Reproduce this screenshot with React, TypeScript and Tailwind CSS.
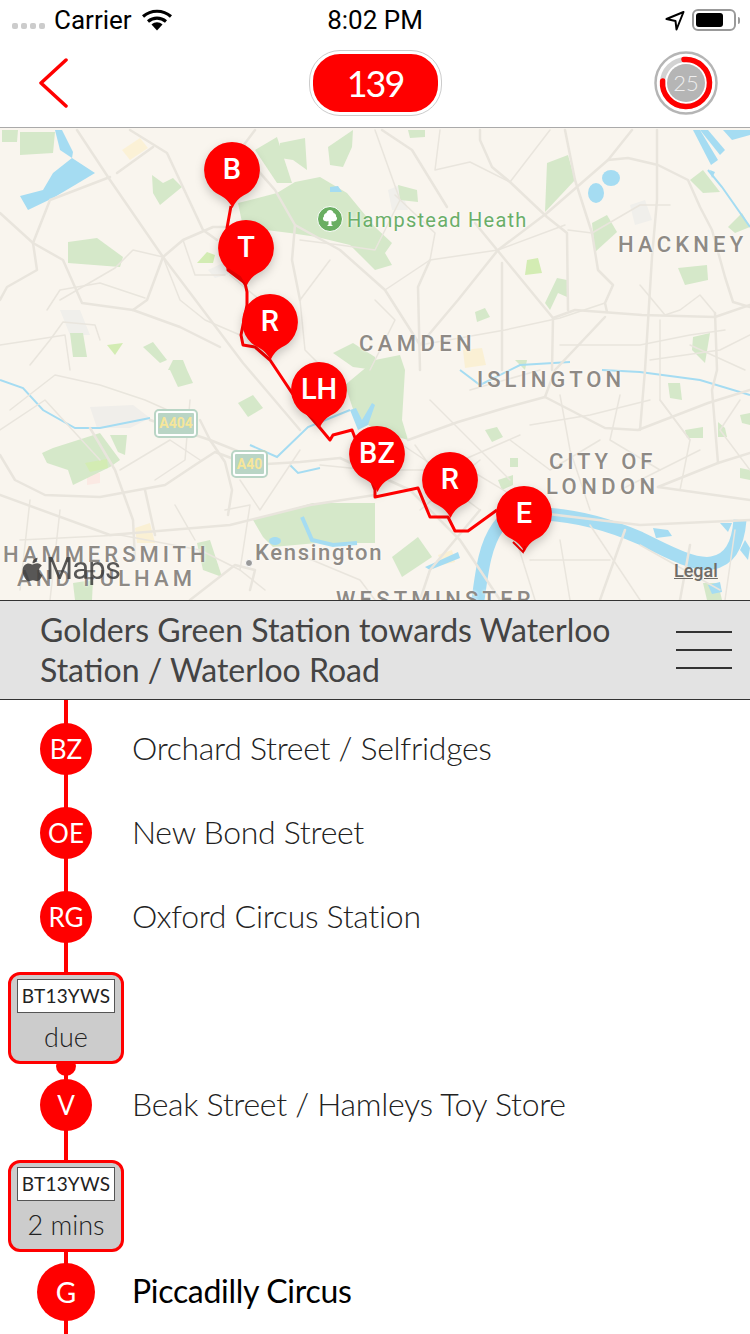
import { FaApple } from "react-icons/fa";

// map artwork uses page coordinates, hence the viewBox offset of 128
const water = [
  "20,196 43,190 53,173 72,158 95,173 75,185 53,198 28,210",
  "55,130 62,130 73,152 72,158 60,150",
  "693,130 700,130 718,160 711,165",
  "708,130 725,150 720,155 700,130",
  "723,130 750,130 750,135 732,140",
  "330,187 338,186 342,192 330,192",
  "710,170 715,172 712,178",
  "425,567 458,552 460,558 430,570",
  "720,523 732,523 728,532",
  "653,528 668,530 672,536 656,538",
  "740,550 745,540 750,548 748,560",
  "350,410 356,408 362,420 372,403 375,405 368,425 358,430",
  "708,585 720,582 722,592 712,594",
];

const parks = [
  "20,132 55,132 53,153 20,155",
  "2,130 18,130 17,142 2,142",
  "152,175 163,183 173,178 182,187 160,205 153,193",
  "255,150 277,137 292,183 277,183",
  "280,143 305,138 307,170 293,160 280,158",
  "328,147 353,130 352,147 343,167 330,165",
  "238,203 277,193 295,182 320,177 347,193 375,227 392,243 385,253 392,265 375,270 350,245 317,237 290,233 243,227",
  "68,242 97,238 123,257 120,267 68,263",
  "70,333 83,333 87,357 73,357",
  "143,347 153,342 167,360 160,363",
  "173,360 183,360 187,370 168,370",
  "333,353 353,343 375,357 375,370 353,367",
  "345,385 375,360 400,355 405,370 402,420 408,440 375,430 355,415",
  "547,163 568,155 575,180 545,212",
  "592,223 607,215 617,232 595,252",
  "557,278 567,280 567,297 558,293 550,310 545,303",
  "398,185 417,190 418,202 400,200",
  "690,180 703,170 720,192 703,193",
  "678,268 707,265 708,280 685,285",
  "475,312 485,308 490,317 477,322",
  "693,337 710,333 705,363 692,350",
  "728,227 742,213 750,227 735,233",
  "408,130 425,130 425,137 410,138",
  "515,360 527,360 525,370",
  "170,370 187,370 193,383 178,387",
  "238,403 253,395 263,408 248,417",
  "42,453 53,448 100,433 120,460 110,467 73,485 68,470 47,463",
  "110,435 127,435 125,455 118,452",
  "253,520 313,503 375,503 375,543 317,543 273,547 263,537",
  "197,543 210,540 222,577 203,570",
  "73,583 93,580 92,600 75,600",
  "485,430 497,427 503,437 492,442",
  "510,458 518,458 518,467 510,467",
  "498,480 513,475 513,485 502,490",
  "668,383 680,383 682,400 670,398",
  "685,430 703,427 703,438 687,438",
  "718,422 725,428 727,437 718,437",
  "740,468 750,470 750,480 740,478",
  "392,557 418,537 432,557 402,577",
  "703,583 718,583 722,600 707,600",
  "740,415 750,413 750,425 742,423",
];

const lightParks = [
  "197,263 207,252 215,255 213,263",
  "107,345 123,343 115,355",
  "527,260 538,258 542,273 525,275",
  "85,463 107,459 108,468 90,472",
];

const majorRoads = [
  "77,130 110,180 163,257 243,363 300,430",
  "0,213 33,243 63,260 82,303 133,310 180,327 220,347",
  "33,243 37,270 7,287 0,300",
  "110,177 50,200 33,243",
  "130,130 167,153 203,230 217,240",
  "163,257 183,240 213,227 230,227",
  "163,257 147,300 133,310",
  "153,147 117,173",
  "382,130 412,150 447,207",
  "480,130 480,140 492,167 510,182 547,217 567,233 568,310",
  "565,130 575,180 592,233 598,270 613,285 605,303 607,312",
  "632,130 608,160 547,213 498,250 458,300 420,345",
  "608,160 628,158 658,165 688,180 700,207 712,230 725,277 733,302 750,307",
  "657,130 657,200 652,257 645,370 640,430",
  "475,223 553,318 552,370",
  "553,318 575,310 642,315 715,317 750,305",
  "715,313 717,370 712,390 718,463",
  "430,260 418,287 420,370",
  "502,263 502,370",
  "605,317 555,370 545,397",
  "408,440 458,422 508,407 545,397 605,428 638,430 708,403 750,390",
  "658,487 750,500",
  "658,487 718,463 750,453",
  "0,495 110,535 230,525 310,505 375,495",
  "0,455 15,480 45,495 100,497 165,485 195,465 215,452 250,465 300,462 340,458",
  "145,490 155,535",
  "90,428 115,470 133,520 135,560",
  "200,420 210,440 225,462 232,490 228,515",
  "150,420 210,440 260,460",
  "515,510 640,525 750,520",
  "255,130 240,150 275,190 295,225 292,260 300,300",
  "295,225 340,250 385,290 420,345",
  "250,590 255,570 235,565 190,600",
  "340,458 410,490 460,540 500,600",
  "480,510 430,570 420,600",
  "625,530 600,600",
  "690,545 680,600",
];

const minorRoads = [
  "60,300 115,268 133,250 163,257",
  "47,310 60,290 100,283 145,298",
  "0,345 33,340 65,335 70,370",
  "30,365 50,340 63,322 95,325 100,340",
  "230,275 260,300 265,340",
  "163,257 180,300 205,320 240,335",
  "183,240 195,275 225,275",
  "300,240 340,245 375,250 400,200 375,130",
  "330,260 300,300 305,350 325,370",
  "375,300 395,320 370,370",
  "395,195 435,233 430,260 385,290",
  "440,130 435,170 470,162 510,182 550,130",
  "430,260 498,250 565,225",
  "605,303 560,318 505,330 420,345",
  "568,230 592,233 640,205 670,205",
  "640,285 665,315 680,310 700,295 715,313",
  "725,330 690,335 640,345 560,345",
  "650,360 720,350 750,335",
  "10,410 55,375 100,385 145,400 190,420",
  "0,430 45,400 100,460",
  "155,480 185,460 190,400",
  "240,480 260,510 300,450",
  "120,470 170,440 200,460",
  "320,465 370,470 395,440 440,470",
  "225,510 250,505 240,570 265,590",
  "300,555 360,580 375,600",
  "20,540 120,535 200,550 240,570",
  "175,505 195,540",
  "30,500 20,590",
  "60,510 50,600",
  "430,400 470,440 510,480",
  "415,445 440,480 480,510",
  "470,390 540,370",
  "510,440 550,470 600,440",
  "560,395 570,450 590,510",
  "620,395 610,440 660,470",
  "660,400 690,440 680,490",
  "740,400 720,430 750,470",
  "620,490 700,450",
  "560,540 570,600",
  "590,525 640,600",
  "530,560 610,560",
  "640,545 720,590",
  "735,530 725,600",
  "510,520 535,600",
  "440,470 520,435",
  "400,470 470,470 520,500",
  "420,510 480,460",
  "530,425 590,415 650,400",
  "660,320 660,400 690,440",
  "745,370 690,345",
];

function MapArt() {
  return (
    <svg viewBox="0 128 750 472" className="absolute inset-0 h-full w-full">
      <rect x="0" y="128" width="750" height="472" fill="#f9f5ee" />
      <polygon points="90,407 133,405 150,418 130,428 97,428" fill="#f0eeea" />
      <polygon points="60,310 80,310 90,335 70,335" fill="#f0efeb" />
      <polygon points="208,270 225,262 235,272 215,278" fill="#f0efeb" />
      <polygon points="630,205 645,200 652,220 635,225" fill="#f0efeb" />
      <polygon points="388,190 400,185 408,210 392,210" fill="#f0efeb" />
      <polygon points="122,150 140,138 148,148 130,160" fill="#fbf1d6" />
      <polygon points="135,528 150,523 155,543 137,543" fill="#faf0d4" />
      <polygon points="463,350 482,348 486,365 465,368" fill="#faf0d4" />
      <polygon points="438,555 452,550 455,562 442,565" fill="#faf0d4" />
      <polygon points="87,472 100,473 100,483 87,485" fill="#fbe9e3" />
      {parks.map((p, i) => (
        <polygon key={i} points={p} fill="#d5e8c9" />
      ))}
      {lightParks.map((p, i) => (
        <polygon key={i} points={p} fill="#d3ecb3" />
      ))}
      <path d="M478 600 C482 570 485 545 498 527 C505 515 520 512 545 514 C580 516 610 525 640 538 C670 553 695 566 712 563 C730 560 738 545 740 520" fill="none" stroke="#a5dcf2" strokeWidth="13" />
      {water.map((p, i) => (
        <polygon key={i} points={p} fill="#a5dcf2" />
      ))}
      <ellipse cx="596" cy="193" rx="8" ry="10" fill="#a5dcf2" />
      <ellipse cx="611" cy="178" rx="9" ry="8" fill="#a5dcf2" />
      <ellipse cx="275" cy="541" rx="6" ry="4" fill="#a5dcf2" />
      <g fill="none" stroke="#a5dcf2" strokeWidth="2">
        <polyline points="0,380 23,388 43,410 75,428 100,428 150,418" />
        <polyline points="250,445 277,457 308,427 350,410" />
        <polyline points="290,465 298,473 320,468" />
        <polyline points="708,170 722,187 750,227" />
        <polyline points="602,370 640,372 700,380 750,395" />
        <polyline points="460,370 480,385 520,365 570,362" />
        <polyline points="302,517 312,540 333,545 357,543" strokeWidth="4" />
      </g>
      <g fill="none" stroke="#e9e5dd" strokeLinejoin="round" strokeLinecap="round">
        {minorRoads.map((p, i) => (
          <polyline key={i} points={p} strokeWidth="1.5" />
        ))}
        {majorRoads.map((p, i) => (
          <polyline key={i} points={p} strokeWidth="2.5" />
        ))}
      </g>
      <polyline
        points="231,206 227,228 228,270 245,283 247,292 247,305 241,335 243,345 255,347 270,360 300,405 320,428 330,440 333,435 352,430 375,490 375,497 418,488 430,517 448,517 455,531 468,531 497,510"
        fill="none"
        stroke="#f00"
        strokeWidth="3"
        strokeLinejoin="round"
      />
    </svg>
  );
}

function Pin({ x, y, label }: { x: number; y: number; label: string }) {
  return (
    <div className="absolute h-[66px] w-[56px]" style={{ left: x - 28, top: y - 156 }}>
      <svg viewBox="0 0 56 66" className="absolute inset-0 h-full w-full drop-shadow-[0_4px_5px_rgba(0,0,0,0.2)]">
        <path d="M28 0a28 28 0 0 1 11 53.7C35 56 31 60 28.5 66 26 60 21 56 17 53.7A28 28 0 0 1 28 0z" fill="#f00" />
      </svg>
      <span className="absolute inset-x-0 top-0 flex h-[56px] items-center justify-center font-['Roboto',sans-serif] text-[29px] font-medium text-white">
        {label}
      </span>
    </div>
  );
}

function MapLabel({ x, y, text, className }: { x: number; y: number; text: string; className: string }) {
  return (
    <span
      className={`absolute whitespace-nowrap font-['Roboto',sans-serif] leading-none [text-shadow:0_0_3px_#fff] ${className}`}
      style={{ left: x, top: y - 128 }}
    >
      {text}
    </span>
  );
}

function RoadBadge({ x, y, w, h, text }: { x: number; y: number; w: number; h: number; text: string }) {
  return (
    <div
      className="absolute flex items-center justify-center rounded-[5px] border-2 border-[#b9d5c5] bg-[#b9d5c5] font-['Roboto',sans-serif] text-[14px] font-bold text-[#f6e69a] outline-2 -outline-offset-4 outline-white"
      style={{ left: x, top: y - 128, width: w, height: h }}
    >
      {text}
    </div>
  );
}

function StatusBar() {
  return (
    <div className="grid h-10 grid-cols-[1fr_auto_1fr] items-center font-['Roboto',sans-serif] text-[26px] leading-none text-black">
      <div className="flex items-center pl-3">
        <div className="mt-3 flex gap-[3px]">
          <span className="h-[6px] w-[6px] rounded-[2px] bg-[#ccc]" />
          <span className="h-[6px] w-[6px] rounded-[2px] bg-[#ccc]" />
          <span className="h-[6px] w-[6px] rounded-[2px] bg-[#ccc]" />
          <span className="h-[6px] w-[6px] rounded-[2px] bg-[#ccc]" />
        </div>
        <span className="ml-[9px]">Carrier</span>
        <svg width="30" height="22" viewBox="0 0 30 22" className="ml-[10px]">
          <path d="M1 7.500C9 .5 21 .5 29 7.500" fill="none" stroke="#000" strokeWidth="3.2" />
          <path d="M6 12.500c5.500-4.500 12.500-4.500 18 0" fill="none" stroke="#000" strokeWidth="3.2" />
          <path d="M9.500 15.500c3.500-3 7.500-3 11 0L15 21.500z" fill="#000" />
        </svg>
      </div>
      <span>8:02 PM</span>
      <div className="flex items-center justify-end pr-[10px]">
        <svg width="22" height="22" viewBox="0 0 22 22">
          <path d="M18.500 3 1.500 10l9 2 1 8.500z" fill="none" stroke="#000" strokeWidth="2" strokeLinejoin="round" />
        </svg>
        <div className="ml-[5px] h-[22px] w-[44px] rounded-[6px] border-2 border-[#999] p-[2px]">
          <div className="h-full w-[27px] rounded-[3px] bg-black" />
        </div>
        <span className="ml-[2px] h-[7px] w-[2px] rounded-r-sm bg-[#999]" />
      </div>
    </div>
  );
}

function NavBar() {
  return (
    <div className="grid h-[88px] grid-cols-[1fr_auto_1fr] items-center border-b border-[#aaa] pb-[1px]">
      <svg width="30" height="50" viewBox="0 0 30 50" className="ml-[39px]">
        <path d="M27 2 2 25l25 23" fill="none" stroke="#f00" strokeWidth="3.5" strokeLinecap="round" strokeLinejoin="round" />
      </svg>
      <div className="flex h-[64px] w-[131px] items-center justify-center rounded-[30px] border-[3px] border-white bg-[#f00] text-[36px] tracking-[-2px] text-white outline-1 outline-[#ccc]">
        139
      </div>
      <svg width="64" height="64" viewBox="0 0 64 64" className="mr-[32px] justify-self-end">
        <circle cx="32" cy="32" r="30.500" fill="#fff" stroke="#b5b5b5" strokeWidth="2.5" />
        <circle cx="32" cy="32" r="23.500" fill="none" stroke="#d2d2d2" strokeWidth="5" />
        <path d="M30 8.600A23.500 23.500 0 1 1 8.600 30" fill="none" stroke="#f00" strokeWidth="5.5" strokeLinecap="round" />
        <circle cx="32" cy="32" r="19" fill="#b5b5b5" />
        <text x="32" y="40" textAnchor="middle" fill="#eee" fontSize="22" fontWeight="300" fontFamily="Lato, sans-serif">
          25
        </text>
      </svg>
    </div>
  );
}

function Stop({ code, name, big }: { code: string; name: string; big?: boolean }) {
  return (
    <div className="relative flex h-[84px] items-center">
      <div className="flex w-[133px] justify-center pr-px">
        <div
          className={`flex items-center justify-center rounded-full bg-[#f00] text-white ${big ? "h-[58px] w-[58px] text-[28px]" : "h-[52px] w-[52px] text-[26px]"}`}
        >
          {code}
        </div>
      </div>
      <span className={`-ml-px pb-[2px] text-[32px] tracking-[-0.3px] ${big ? "font-normal text-black" : "font-light text-[#222]"}`}>{name}</span>
    </div>
  );
}

function Bus({ time, dot, overlap }: { time: string; dot?: boolean; overlap: string }) {
  return (
    <div className={`relative ml-2 mt-[13px] h-[92px] w-[116px] ${overlap}`}>
      {dot && <div className="absolute left-[48px] top-[84px] h-5 w-5 rounded-full bg-[#f00]" />}
      <div className="relative flex h-full flex-col items-center rounded-xl border-[3px] border-[#f00] bg-[#ccc] px-[6px] pt-1">
        <div className="flex h-[34px] w-full items-center justify-center border border-[#555] bg-white text-[19px] tracking-[0.2px] text-[#222]">BT13YWS</div>
        <div className="mt-[6px] text-[27px] font-light leading-9 text-[#222]">{time}</div>
      </div>
    </div>
  );
}

export default function App() {
  return (
    <div className="relative h-[1334px] w-[750px] overflow-hidden bg-white font-['Lato',sans-serif]">
      <StatusBar />
      <NavBar />

      <div className="relative h-[472px] overflow-hidden">
        <MapArt />
        <div className="absolute left-[317px] top-[78px] flex h-[26px] w-[26px] items-center justify-center rounded-full border border-white bg-[#6aae62]">
          <svg width="16" height="18" viewBox="0 0 16 18">
            <path d="M8 0c2 0 3.500 1.500 3.500 3 2 .5 3 2 2.500 3.500 1.500 1 1.500 4-1 4.500-1 .5-2.500.5-3.500 0v3.500L11 16H5l1.500-1.500V11c-1 .5-2.500.5-3.500 0-2.500-.5-2.500-3.500-1-4.500C1.500 5 2.500 3.500 4.500 3 4.500 1.500 6 0 8 0z" fill="#fff" />
          </svg>
        </div>
        <MapLabel x={347} y={210} text="Hampstead Heath" className="text-[20px] tracking-[1.25px] text-[#6aae68]" />
        <MapLabel x={618} y={234} text="HACKNEY" className="text-[22px] font-medium tracking-[4.2px] text-[#8e8a85]" />
        <MapLabel x={359} y={333} text="CAMDEN" className="text-[22px] font-medium tracking-[4.4px] text-[#8e8a85]" />
        <MapLabel x={477} y={369} text="ISLINGTON" className="text-[22px] font-medium tracking-[4px] text-[#8e8a85]" />
        <MapLabel x={549} y={451} text="CITY OF" className="text-[22px] font-medium tracking-[3.9px] text-[#8e8a85]" />
        <MapLabel x={546} y={476} text="LONDON" className="text-[22px] font-medium tracking-[4.4px] text-[#8e8a85]" />
        <MapLabel x={3} y={544} text="HAMMERSMITH" className="text-[22px] font-medium tracking-[4px] text-[#8e8a85]" />
        <MapLabel x={17} y={568} text="AND FULHAM" className="text-[22px] font-medium tracking-[4.1px] text-[#8e8a85]" />
        <MapLabel x={255} y={542} text="Kensington" className="text-[22px] font-medium tracking-[1.7px] text-[#8e8a85]" />
        <MapLabel x={336} y={589} text="WESTMINSTER" className="text-[22px] font-medium tracking-[4.2px] text-[#8e8a85]" />
        <div className="absolute left-[245px] top-[431px] h-2 w-2 rounded-full border border-white bg-[#999]" />
        <RoadBadge x={154} y={409} w={44} h={29} text="A404" />
        <RoadBadge x={231} y={450} w={37} h={28} text="A40" />
        <Pin x={232} y={170} label="B" />
        <Pin x={246} y={248} label="T" />
        <Pin x={270} y={322} label="R" />
        <Pin x={319} y={390} label="LH" />
        <Pin x={377} y={454} label="BZ" />
        <Pin x={450} y={480} label="R" />
        <Pin x={524} y={514} label="E" />
        <svg viewBox="0 128 750 472" className="absolute inset-0 h-full w-full">
          <polyline points="513,542 523,552 525,546" fill="none" stroke="#e00000" strokeWidth="2" />
          <polyline points="228,269 240,277 245,285" fill="none" stroke="#e00000" strokeWidth="2" />
        </svg>
        <div className="absolute left-[19px] top-[423px] flex items-center text-[#3c3c3c] opacity-85">
          <FaApple className="h-[27px] w-[27px]" />
          <span className="font-['Roboto',sans-serif] text-[31px] leading-9 tracking-[-0.8px]">Maps</span>
        </div>
        <span className="absolute left-[674px] top-[433px] font-['Roboto',sans-serif] text-[18px] font-medium leading-5 text-[#6f6c68] underline">Legal</span>
      </div>

      <div className="flex h-[100px] items-center justify-between border-y border-[#333] bg-[#e3e3e3] pb-[1px] pl-10 pr-[18px]">
        <div className="w-[590px] text-[32px] leading-10 text-[#444]">
          Golders Green Station towards Waterloo Station / Waterloo Road
        </div>
        <div className="flex w-[56px] flex-col gap-4">
          <span className="h-0.5 bg-[#333]" />
          <span className="h-0.5 bg-[#333]" />
          <span className="h-0.5 bg-[#333]" />
        </div>
      </div>

      <div className="relative pt-[7px]">
        <div className="absolute left-[64px] top-0 h-full w-1 bg-[#f00]" />
        <Stop code="BZ" name="Orchard Street / Selfridges" />
        <Stop code="OE" name="New Bond Street" />
        <Stop code="RG" name="Oxford Circus Station" />
        <Bus time="due" dot overlap="-mb-px" />
        <Stop code="V" name="Beak Street / Hamleys Toy Store" />
        <Bus time="2 mins" overlap="-mb-0.5" />
        <Stop code="G" name="Piccadilly Circus" big />
      </div>
    </div>
  );
}
